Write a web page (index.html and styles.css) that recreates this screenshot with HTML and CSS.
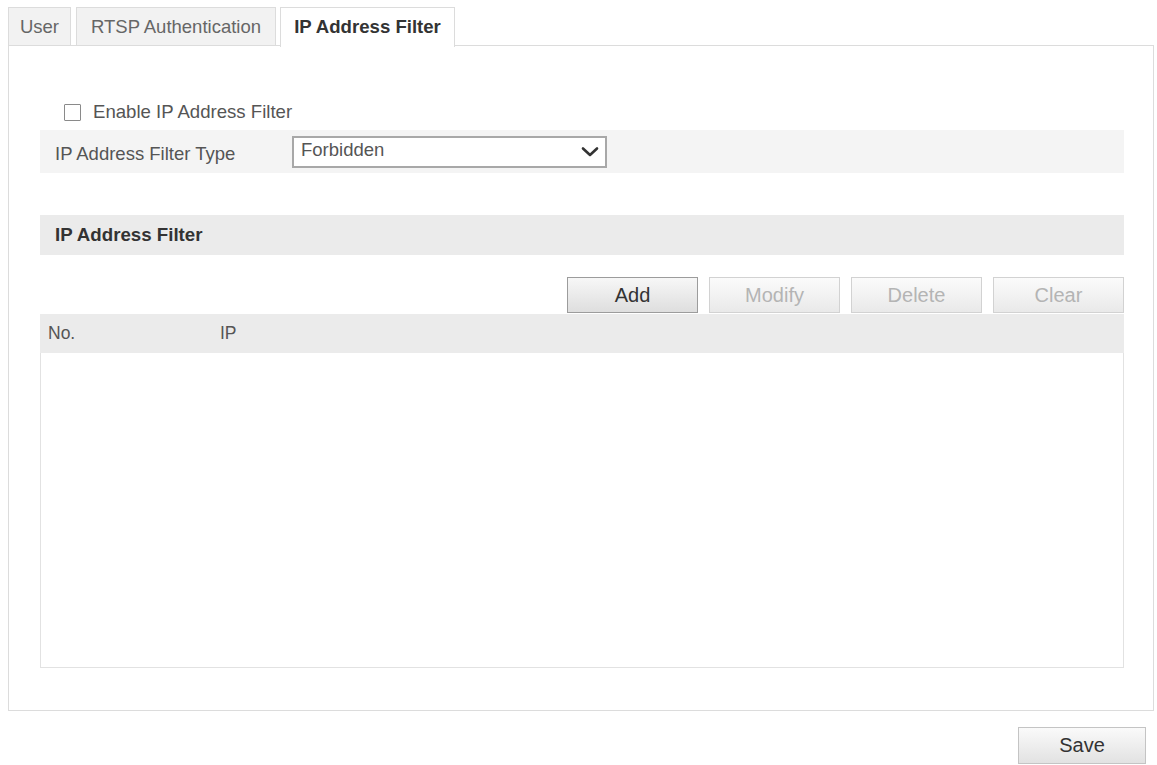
FILE: index.html
```html
<!DOCTYPE html>
<html>
<head>
<meta charset="utf-8">
<link rel="stylesheet" href="styles.css">
</head>
<body>
<div class="page">
  <div class="tabs">
    <div class="tab tab-user">User</div>
    <div class="tab tab-rtsp">RTSP Authentication</div>
    <div class="tab tab-active">IP Address Filter</div>
  </div>
  <div class="panel">
    <label class="check-row">
      <span class="checkbox"></span>
      <span class="check-label">Enable IP Address Filter</span>
    </label>
    <div class="type-row">
      <span class="type-label">IP Address Filter Type</span>
      <div class="select">
        <span class="select-text">Forbidden</span>
        <svg class="chevron" width="18" height="12" viewBox="0 0 18 12"><path d="M2 2.5 L9 9 L16 2.5" fill="none" stroke="#333" stroke-width="2.6" stroke-linecap="round" stroke-linejoin="round"/></svg>
      </div>
    </div>
    <div class="section-head">IP Address Filter</div>
    <div class="btn-row">
      <button class="btn btn-add">Add</button>
      <button class="btn btn-disabled">Modify</button>
      <button class="btn btn-disabled">Delete</button>
      <button class="btn btn-disabled">Clear</button>
    </div>
    <div class="table-head">
      <span class="col-no">No.</span>
      <span class="col-ip">IP</span>
    </div>
    <div class="table-body"></div>
  </div>
  <div class="save-row">
    <button class="btn btn-save">Save</button>
  </div>
</div>
</body>
</html>
```

FILE: styles.css
```css
html, body {
  margin: 0;
  padding: 0;
  background: #ffffff;
}
body {
  font-family: "Liberation Sans", Arial, sans-serif;
  color: #555555;
  width: 1157px;
  height: 765px;
  overflow: hidden;
}
.page {
  padding: 7px 0 0 8px;
}
.tabs {
  display: flex;
  gap: 4px;
  height: 38px;
  align-items: flex-end;
  position: relative;
  z-index: 2;
}
.tab {
  box-sizing: border-box;
  height: 38px;
  border: 1px solid #dcdcdc;
  border-bottom: none;
  background: #f2f2f2;
  font-size: 18.5px;
  color: #666666;
  display: flex;
  align-items: center;
  justify-content: center;
}
.tab-user {
  width: 63px;
}
.tab-rtsp {
  width: 200px;
  margin-left: 1px;
}
.tab-active {
  width: 175px;
  height: 40px;
  margin-bottom: -2px;
  background: #ffffff;
  font-weight: bold;
  font-size: 18.6px;
  color: #333333;
  padding-bottom: 2px;
}
.panel {
  box-sizing: border-box;
  width: 1146px;
  height: 666px;
  border: 1px solid #dcdcdc;
  padding: 54px 29px 42px 31px;
  display: flex;
  flex-direction: column;
  position: relative;
  z-index: 1;
}
.check-row {
  display: flex;
  align-items: center;
  height: 24px;
  padding-left: 24px;
  gap: 12px;
}
.checkbox {
  box-sizing: border-box;
  width: 17px;
  height: 17px;
  border: 1px solid #8a8a8a;
  background: #ffffff;
  border-radius: 1px;
}
.check-label {
  font-size: 18.6px;
  color: #555555;
}
.type-row {
  margin-top: 6px;
  height: 43px;
  background: #f4f4f4;
  display: flex;
  align-items: center;
  padding-left: 15px;
}
.type-label {
  width: 237px;
  font-size: 18.5px;
  color: #555555;
  padding-top: 5px;
}
.select {
  box-sizing: border-box;
  width: 315px;
  height: 32px;
  border: 2px solid #a8a8a8;
  background: #ffffff;
  display: flex;
  align-items: center;
  justify-content: space-between;
  padding: 0 6px 0 7px;
}
.select-text {
  font-size: 18.5px;
  color: #555555;
  padding-bottom: 4px;
}
.chevron {
  display: block;
}
.section-head {
  margin-top: 42px;
  height: 40px;
  background: #ebebeb;
  font-weight: bold;
  font-size: 18.7px;
  color: #333333;
  display: flex;
  align-items: center;
  padding-left: 15px;
}
.btn-row {
  margin-top: 22px;
  display: flex;
  justify-content: flex-end;
  gap: 11px;
}
.btn {
  box-sizing: border-box;
  width: 131px;
  height: 36px;
  font-family: "Liberation Sans", Arial, sans-serif;
  font-size: 20px;
  border: 1px solid #d2d2d2;
  background: linear-gradient(#fbfbfb, #e9e9e9);
  padding: 0;
  margin: 0;
}
.btn-add {
  border-color: #9c9c9c;
  color: #333333;
  background: linear-gradient(#f7f7f7, #dedede);
}
.btn-disabled {
  color: #b4b4b4;
}
.table-head {
  margin-top: 1px;
  height: 39px;
  background: #ebebeb;
  display: flex;
  align-items: center;
  font-size: 17.5px;
  color: #555555;
}
.col-no {
  width: 172px;
  padding-left: 8px;
}
.table-body {
  box-sizing: border-box;
  height: 315px;
  border: 1px solid #e2e2e2;
  border-top: none;
}
.save-row {
  width: 1138px;
  display: flex;
  justify-content: flex-end;
  margin-top: 16px;
}
.btn-save {
  width: 128px;
  height: 37px;
  color: #333333;
  border-color: #c4c4c4;
  background: linear-gradient(#fafafa, #e2e2e2);
}
```
